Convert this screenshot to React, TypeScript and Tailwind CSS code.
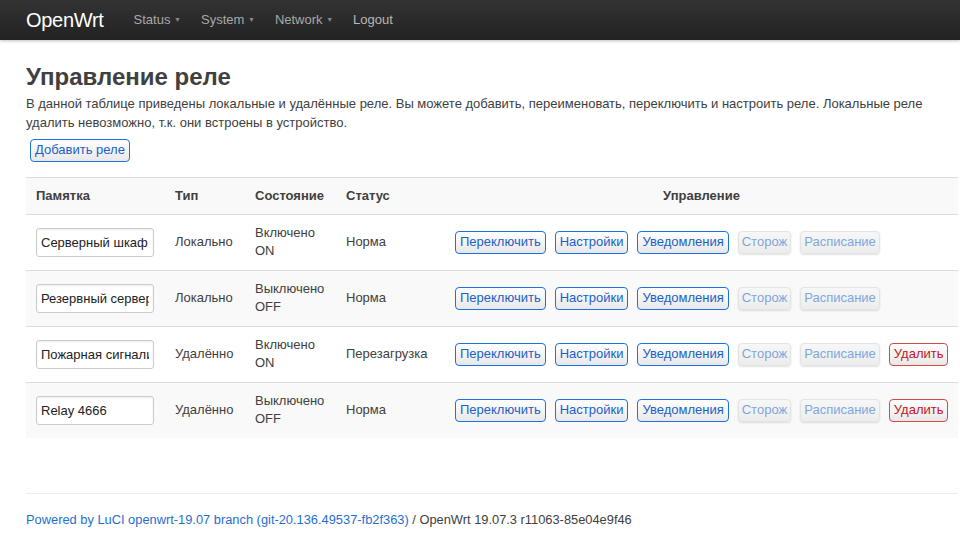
import React from "react";

const rows = [
  { name: "Серверный шкаф", type: "Локально", st1: "Включено", st2: "ON", status: "Норма", del: false },
  { name: "Резервный сервер", type: "Локально", st1: "Выключено", st2: "OFF", status: "Норма", del: false },
  { name: "Пожарная сигнализация", type: "Удалённо", st1: "Включено", st2: "ON", status: "Перезагрузка", del: true },
  { name: "Relay 4666", type: "Удалённо", st1: "Выключено", st2: "OFF", status: "Норма", del: true },
];

function Btn({ children, kind }: { children: React.ReactNode; kind: "blue" | "dis" | "red" }) {
  const cls =
    kind === "blue"
      ? "px-[4px] border-[#1a73e0] text-[#1c5fc8] bg-gradient-to-b from-white to-[#e8e8e8]"
      : kind === "red"
      ? "px-[4px] border-[#d84848] text-[#c4161c] bg-gradient-to-b from-white to-[#e8e8e8]"
      : "px-[3px] border-[#e4e4e4] text-[#7fa6dc] bg-gradient-to-b from-[#f7f7f7] to-[#ececec] shadow-[0_1px_2px_rgba(0,0,0,0.12)]";
  return (
    <span className={`inline-flex items-center h-[23px] border rounded-[4px] text-[13px] leading-[18px] whitespace-nowrap ${cls}`}>
      {children}
    </span>
  );
}

export default function App() {
  return (
    <div className="min-h-[542px] bg-white text-[#404040]" style={{ fontFamily: '"Liberation Sans", Arial, sans-serif' }}>
      <div className="h-[40px] bg-gradient-to-b from-[#333333] to-[#222222] flex items-center pl-[26px] shadow-[0_1px_3px_rgba(0,0,0,0.25)]">
        <span className="text-white text-[20px] leading-[24px] mr-[30px] tracking-[-0.3px]">OpenWrt</span>
        <nav className="flex items-center text-[13px] text-[#a8a8a8] gap-[20px]">
          <span>Status <span className="text-[7px] align-middle text-[#888]">▼</span></span>
          <span>System <span className="text-[7px] align-middle text-[#888]">▼</span></span>
          <span>Network <span className="text-[7px] align-middle text-[#888]">▼</span></span>
          <span className="text-[#b8b8b8]">Logout</span>
        </nav>
      </div>

      <div className="px-[26px] pt-[22px]">
        <h2 className="text-[24px] font-bold leading-[30px] text-[#404040]">Управление реле</h2>
        <p className="text-[13px] leading-[19px] mt-[2px] text-[#404040]">
          В данной таблице приведены локальные и удалённые реле. Вы можете добавить, переименовать, переключить и настроить реле. Локальные реле удалить невозможно, т.к. они встроены в устройство.
        </p>
        <div className="mt-[5px] ml-[4px]">
          <Btn kind="blue">Добавить реле</Btn>
        </div>

        <table className="mt-[15px] w-[932px] border-collapse text-[13px] leading-[18px]">
          <thead>
            <tr className="bg-[#f9f9f9] border-t border-b border-[#dddddd]">
              <th className="text-left font-bold pl-[10px] pt-[9px] pb-[9px] w-[139px]">Памятка</th>
              <th className="text-left font-bold w-[80px] pl-[10px] pt-[9px] pb-[9px]">Тип</th>
              <th className="text-left font-bold w-[91px] pl-[10px] pt-[9px] pb-[9px]">Состояние</th>
              <th className="text-left font-bold w-[109px] pl-[10px] pt-[9px] pb-[9px]">Статус</th>
              <th className="text-center font-bold pt-[9px] pb-[9px]">Управление</th>
            </tr>
          </thead>
          <tbody>
            {rows.map((r, i) => (
              <tr key={i} className={`${i % 2 === 1 ? "bg-[#f9f9f9]" : "bg-white"} ${i < 3 ? "border-b border-[#dddddd]" : ""}`}>
                <td className="pl-[10px] py-[10px] h-[56px]">
                  <input
                    readOnly
                    defaultValue={r.name}
                    className="block w-[118px] h-[29px] border border-[#cccccc] rounded-[3px] bg-white px-[4px] text-[13px] text-[#222] shadow-[inset_0_1px_2px_rgba(0,0,0,0.08)] outline-none"
                    style={{ fontFamily: '"Liberation Sans", Arial, sans-serif' }}
                  />
                </td>
                <td className="pl-[10px]">{r.type}</td>
                <td className="pl-[10px]">
                  <div>{r.st1}</div>
                  <div>{r.st2}</div>
                </td>
                <td className="pl-[10px]">{r.status}</td>
                <td className="pl-[10px]">
                  <div className="flex items-center gap-[9px]">
                    <Btn kind="blue">Переключить</Btn>
                    <Btn kind="blue">Настройки</Btn>
                    <Btn kind="blue">Уведомления</Btn>
                    <Btn kind="dis">Сторож</Btn>
                    <Btn kind="dis">Расписание</Btn>
                    {r.del && <Btn kind="red">Удалить</Btn>}
                  </div>
                </td>
              </tr>
            ))}
          </tbody>
        </table>

        <div className="mt-[55px] border-t border-[#eeeeee] w-[932px]" />
        <p className="mt-[17px] text-[12.85px] leading-[18px]">
          <span className="text-[#1f6fcf]">Powered by LuCI openwrt-19.07 branch (git-20.136.49537-fb2f363)</span>
          <span className="text-[#404040]"> / OpenWrt 19.07.3 r11063-85e04e9f46</span>
        </p>
      </div>
    </div>
  );
}
